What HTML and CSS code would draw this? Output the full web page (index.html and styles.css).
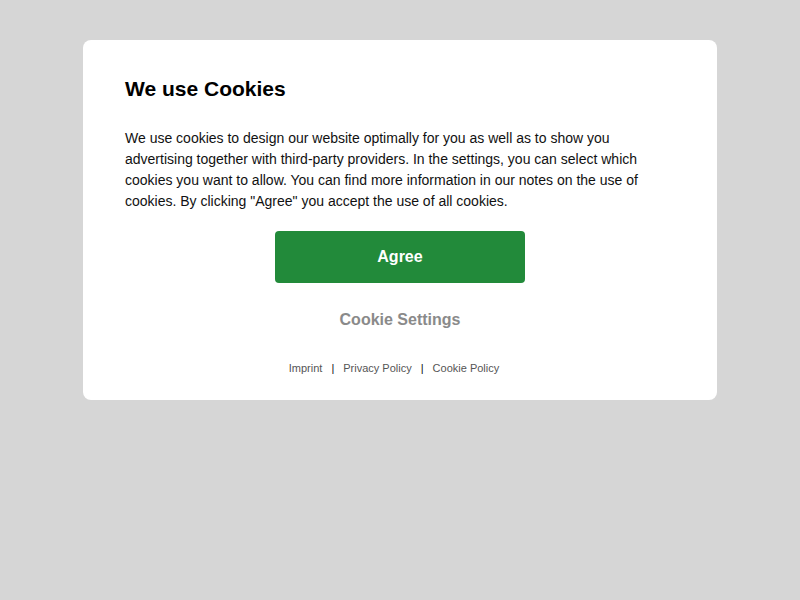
FILE: index.html
```html
<!DOCTYPE html>
<html>
<head>
<meta charset="utf-8">
<link rel="stylesheet" href="styles.css">
</head>
<body>
<div class="page">
  <div class="card">
    <h2 class="title">We use Cookies</h2>
    <p class="text">We use cookies to design our website optimally for you as well as to show you advertising together with third-party providers. In the settings, you can select which cookies you want to allow. You can find more information in our notes on the use of cookies. By clicking "Agree" you accept the use of all cookies.</p>
    <div class="actions">
      <button class="agree">Agree</button>
      <button class="settings">Cookie Settings</button>
    </div>
    <div class="links">
      <a class="link">Imprint</a>
      <span class="sep">|</span>
      <a class="link">Privacy Policy</a>
      <span class="sep">|</span>
      <a class="link">Cookie Policy</a>
    </div>
  </div>
</div>
</body>
</html>
```

FILE: styles.css
```css
html, body {
  margin: 0;
  padding: 0;
  background: #d6d6d6;
  font-family: "Liberation Sans", Arial, sans-serif;
}
.page {
  width: 800px;
  height: 600px;
  padding-top: 40px;
  box-sizing: border-box;
}
.card {
  width: 634px;
  height: 360px;
  margin-left: 83px;
  background: #fff;
  border-radius: 8px;
  box-sizing: border-box;
  padding: 37px 42px 0 42px;
  display: flex;
  flex-direction: column;
}
.title {
  margin: 0;
  font-size: 21px;
  line-height: 24px;
  font-weight: bold;
  color: #000;
}
.text {
  margin: 27px 0 0 0;
  font-size: 14px;
  line-height: 21px;
  color: #111;
}
.actions {
  display: flex;
  flex-direction: column;
  align-items: center;
  margin-top: 19px;
}
.agree {
  width: 250px;
  height: 52px;
  border: none;
  border-radius: 4px;
  background: #228a3a;
  color: #fff;
  font-family: inherit;
  font-size: 16px;
  font-weight: bold;
  padding: 0;
}
.settings {
  margin-top: 27px;
  border: none;
  background: none;
  padding: 0;
  font-family: inherit;
  font-size: 16px;
  line-height: 20px;
  font-weight: bold;
  color: #8a8a8a;
}
.links {
  margin-top: 32px;
  display: flex;
  justify-content: center;
  align-items: center;
  gap: 9px;
  font-size: 11px;
  line-height: 13px;
  padding-right: 12px;
}
.link {
  color: #555;
}
.sep {
  color: #111;
}
```
